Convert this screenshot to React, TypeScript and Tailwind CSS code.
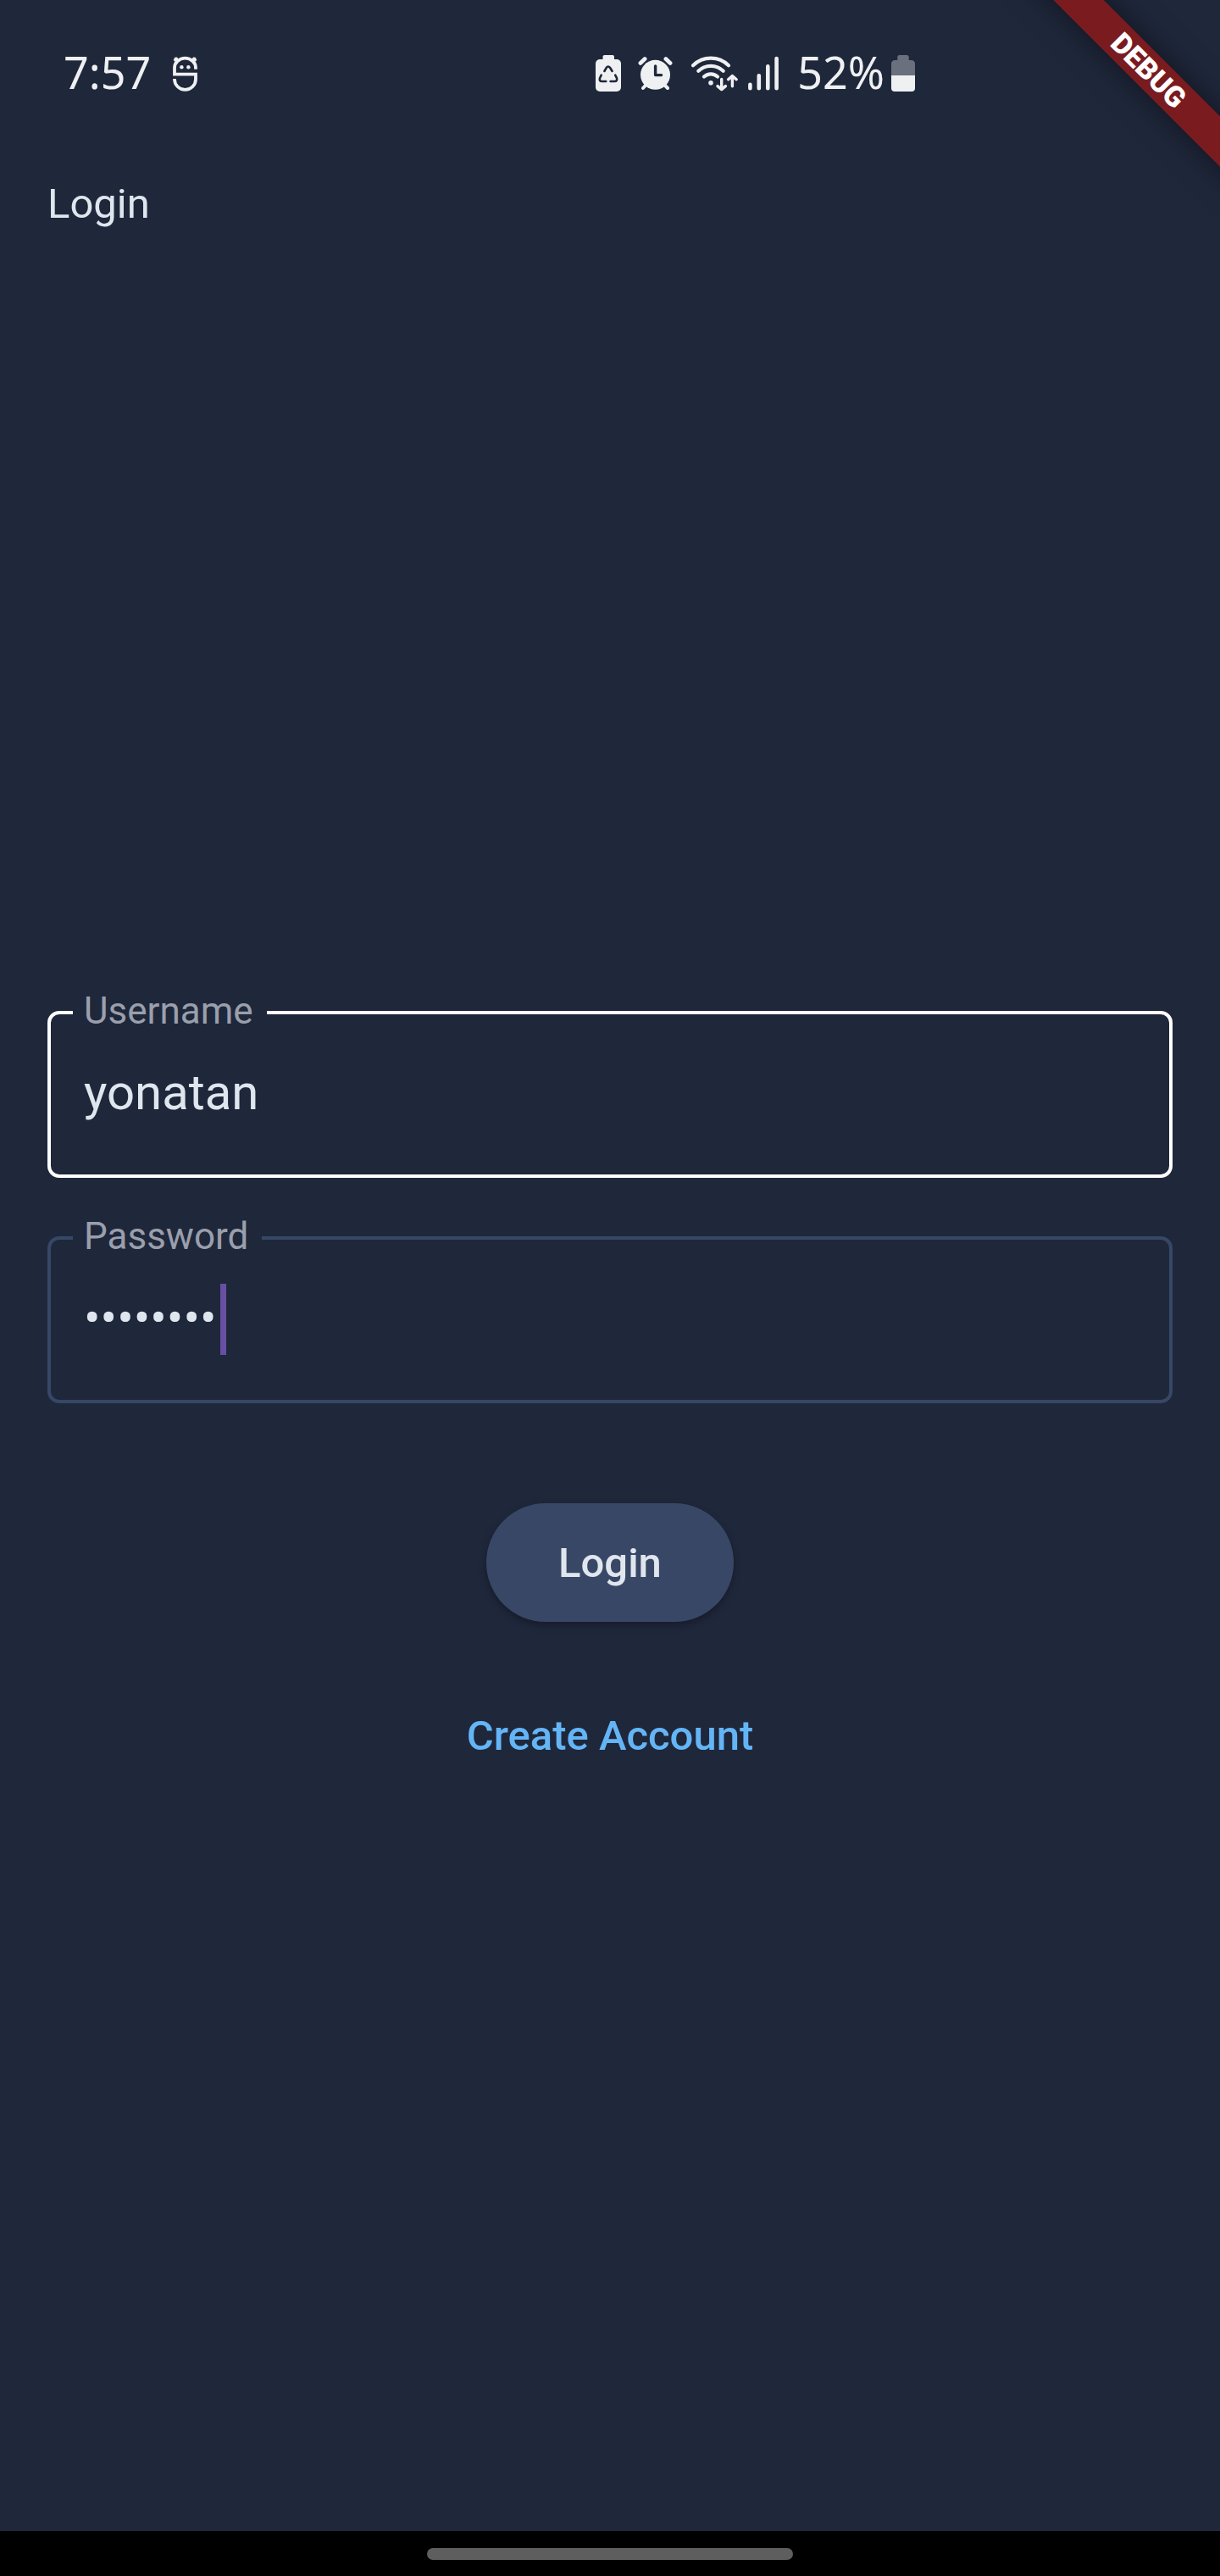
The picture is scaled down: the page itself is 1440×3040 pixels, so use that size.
import { useState } from "react";

function RobotIcon() {
  return (
    <svg className="h-11 w-[30px]" viewBox="0 0 30 44" fill="none" stroke="currentColor" strokeWidth="3.8" aria-hidden="true">
      <path d="M27 16.8V15A12.5 11.3 0 0 0 2 15V22.7H27V28.5A12.5 12.4 0 0 1 2 28.5V28" />
      <path d="M2.2 3.2L6.6 8M26.8 3.2L22.4 8M1.4 6.6L5.6 3.4M27.6 6.6L23.4 3.4" strokeWidth="2.6" />
      <circle cx="10.4" cy="14.3" r="2.2" fill="currentColor" stroke="none" />
      <circle cx="18.4" cy="14.3" r="2.2" fill="currentColor" stroke="none" />
    </svg>
  );
}

function RecycleBatteryIcon() {
  return (
    <svg className="h-11 w-[30px]" viewBox="0 0 30 44" fill="none" aria-hidden="true">
      <rect x="8.5" y="0" width="13.5" height="10" rx="2" fill="currentColor" />
      <rect x="0" y="5" width="30" height="38" rx="5" fill="currentColor" />
      <g stroke="#1f273b" strokeWidth="2.6" strokeLinecap="round" strokeLinejoin="round">
        <path d="M10.4 19L12.8 14.8Q14.8 12.2 17 14.8L19.6 19" />
        <path d="M6.7 23.6L5 27.2Q4 31 7.4 31H12.2" />
        <path d="M23.2 23.6L25 27.2Q26 31 22.4 31H17.6" />
      </g>
    </svg>
  );
}

function AlarmIcon() {
  return (
    <svg className="h-11 w-[42px]" viewBox="0 0 42 44" fill="none" stroke="currentColor" strokeLinecap="round" strokeLinejoin="round" aria-hidden="true">
      <circle cx="20.5" cy="23.3" r="17.5" fill="currentColor" stroke="none" />
      <path d="M2.9 9.4L8.1 4.6M32.9 4.6L38.1 9.4" strokeWidth="4.8" />
      <path d="M9.6 35L6 39M31.2 35L35 39" strokeWidth="4" />
      <path d="M20.6 13V23.6H27.6" stroke="#1f273b" strokeWidth="3.4" />
    </svg>
  );
}

function WifiIcon() {
  return (
    <svg className="h-11 w-[58px]" viewBox="0 0 58 44" fill="none" stroke="currentColor" strokeLinecap="round" strokeLinejoin="round" aria-hidden="true">
      <path d="M3 12.2A30 30 0 0 1 45 12.2M9.3 18.8A21 21 0 0 1 38.7 18.8M16 25.6A11.5 11.5 0 0 1 32 25.6" strokeWidth="4.2" />
      <circle cx="24" cy="32.7" r="2.8" fill="currentColor" stroke="none" />
      <path d="M36.7 28.5V40.3M32 36.6L36.7 40.6L41.4 36.6M49.4 36.8V25M44.6 28.7L49.4 24.6L54.2 28.7" strokeWidth="3.4" />
    </svg>
  );
}

function SignalIcon() {
  return (
    <svg className="h-11 w-9" viewBox="0 0 36 44" fill="none" stroke="currentColor" strokeWidth="4.6" strokeLinecap="round" aria-hidden="true">
      <path d="M2.4 34.8V39.2M12.8 24.2V39.2M23.3 13.4V39.2M33.6 4V39.2" />
    </svg>
  );
}

function BatteryIcon() {
  return (
    <svg className="h-11 w-7" viewBox="0 0 28 44" aria-hidden="true">
      <path d="M7.3 6V2.5Q7.3 0 9.8 0H18.2Q20.7 0 20.7 2.5V6H23.5Q28 6 28 10.5V24H0V10.5Q0 6 4.5 6Z" fill="#6b707e" />
      <path d="M0 24H28V39Q28 43 24 43H4Q0 43 0 39Z" fill="currentColor" />
    </svg>
  );
}

function StatusBar() {
  return (
    <div className="flex h-[174px] items-center justify-between pr-[25%] pl-[75px] font-['Noto_Sans',sans-serif] text-[52px] leading-none text-[#eff0f2]">
      <div className="flex items-center gap-[26px]">
        <span className="pb-1">7:57</span>
        <RobotIcon />
      </div>
      <div className="flex items-center">
        <div className="flex items-center gap-5">
          <RecycleBatteryIcon />
          <AlarmIcon />
          <WifiIcon />
        </div>
        <div className="ml-2.5 flex items-center gap-[22px]">
          <SignalIcon />
          <span className="pb-1">52%</span>
        </div>
        <div className="ml-2 flex">
          <BatteryIcon />
        </div>
      </div>
    </div>
  );
}

function DebugBanner() {
  return (
    <div className="pointer-events-none absolute top-0 right-0 size-[320px] overflow-hidden">
      <div className="absolute top-[62px] -right-[116px] flex h-[42px] w-[400px] rotate-45 items-center justify-center bg-[#7a1b20] text-[34px] leading-none font-black text-white shadow-[0_0_36px_rgba(0,0,0,0.5)]">
        DEBUG
      </div>
    </div>
  );
}

type FieldProps = {
  id: string;
  label: string;
  type: "text" | "password";
  value: string;
  onChange: (value: string) => void;
  borderClass: string;
  caret?: boolean;
};

function OutlinedField({ id, label, type, value, onChange, borderClass, caret }: FieldProps) {
  return (
    <fieldset className={`min-w-0 rounded-[14px] border-4 ${borderClass}`}>
      <legend className="ml-[26px] pr-4 pb-1 pl-[13px] text-[44px] leading-[44px] text-[#9a9fac]">
        <label htmlFor={id}>{label}</label>
      </legend>
      <div className="flex h-[167px] items-start pt-[30px] pr-10 pl-[39px]">
        <input
          id={id}
          type={type}
          value={value}
          onChange={(e) => onChange(e.target.value)}
          autoComplete="off"
          spellCheck={false}
          className={`h-[84px] min-w-0 bg-transparent pb-1 text-[58px] text-[#dfe6ee] caret-[#6750a4] outline-none ${caret ? "[field-sizing:content]" : "w-full"}`}
        />
        {caret && <span className="ml-1 h-[84px] w-[7px] shrink-0 bg-[#6750a4]" aria-hidden="true" />}
      </div>
    </fieldset>
  );
}

export default function App() {
  const [username, setUsername] = useState("yonatan");
  const [password, setPassword] = useState("password");

  return (
    <div className="relative flex min-h-screen flex-col overflow-hidden bg-[#1f273b] font-[Roboto,sans-serif] text-[#dfe6ee]">
      <StatusBar />
      <header className="flex h-[138px] items-center px-14 pb-1">
        <h1 className="text-[49px] leading-[68px]">Login</h1>
      </header>

      <main className="flex flex-1 flex-col justify-center px-14 pb-2.5">
        <form className="flex flex-col" onSubmit={(e) => e.preventDefault()}>
          <div className="flex flex-col gap-[47px]">
            <OutlinedField id="username" label="Username" type="text" value={username} onChange={setUsername} borderClass="border-white" />
            <OutlinedField id="password" label="Password" type="password" value={password} onChange={setPassword} borderClass="border-[#374766]" caret />
          </div>
          <div className="mt-[118px] flex flex-col items-center gap-16">
            <button type="submit" className="h-[140px] rounded-full bg-[#394766] px-[85px] pt-0.5 text-[49px] font-medium shadow-[0_4px_10px_rgba(0,0,0,0.3)]">
              Login
            </button>
            <button type="button" className="h-[140px] px-10 pt-0.5 text-[49px] font-medium text-[#64b5f6]">
              Create Account
            </button>
          </div>
        </form>
      </main>

      <footer className="flex h-[53px] items-center justify-center bg-black">
        <div className="h-3.5 w-[30%] rounded-full bg-[#5e5e5e]" />
      </footer>

      <DebugBanner />
    </div>
  );
}
